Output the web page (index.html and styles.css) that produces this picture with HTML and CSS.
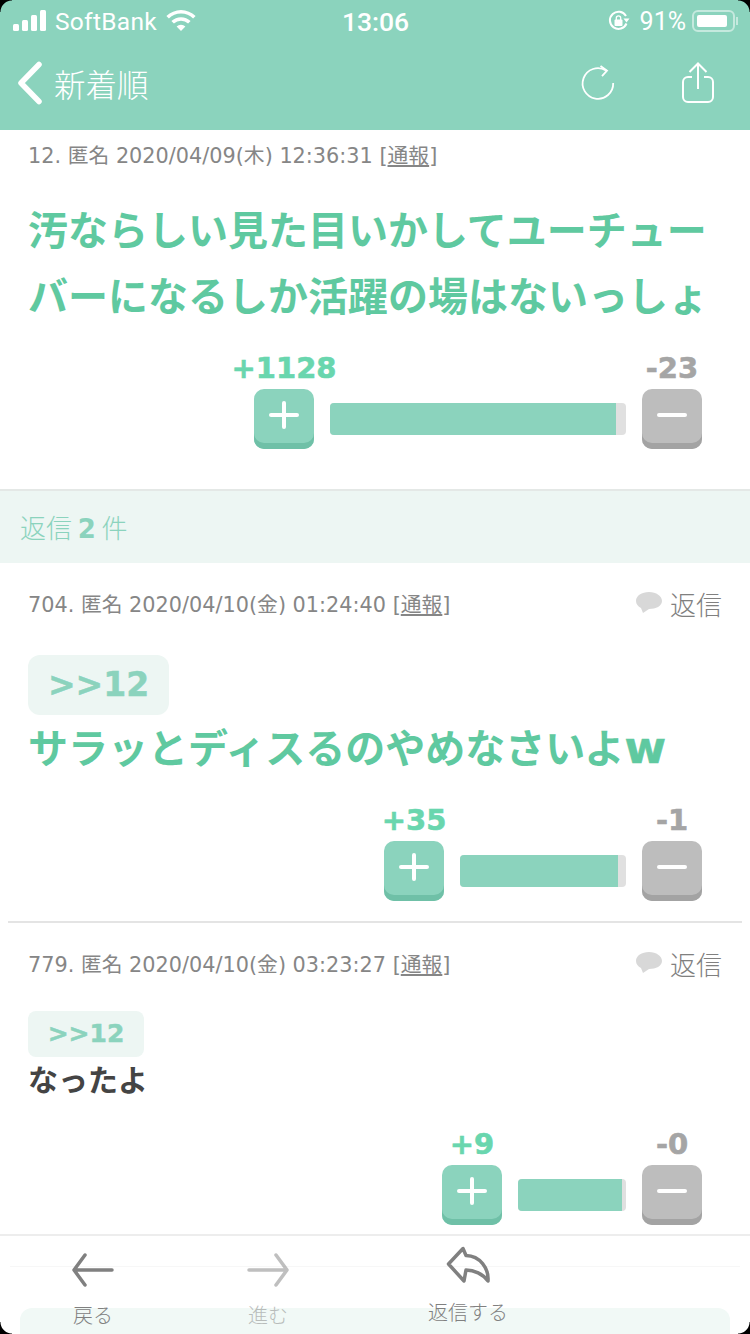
FILE: index.html
```html
<!DOCTYPE html>
<html lang="ja">
  <head>
    <meta charset="UTF-8" />
    <title>新着順</title>
    <link rel="stylesheet" href="styles.css">
  </head>
  <body>
    <div class="screen">
      <header>
        <div class="status">
          <div class="status-left">
            <svg class="signal" width="34" height="22" viewBox="0 0 34 22"><rect x="0" y="14" width="6" height="7" rx="1.5"/><rect x="9" y="10" width="6" height="11" rx="1.5"/><rect x="18" y="5" width="6" height="16" rx="1.5"/><rect x="27" y="0" width="6" height="21" rx="1.5"/></svg>
            <span class="carrier">SoftBank</span>
            <svg class="wifi" width="30" height="22" viewBox="0 0 30 22"><path d="M15 21l-4.400-4.600a6.400 6.400 0 0 1 8.800 0zM7.900 13.600l-2.500-2.600a14 14 0 0 1 19.200 0l-2.500 2.600a10.400 10.400 0 0 0-14.200 0zM2.900 8.500L.4 6a21 21 0 0 1 29.200 0l-2.500 2.500a17.400 17.400 0 0 0-24.200 0z"/></svg>
          </div>
          <span class="time">13:06</span>
          <div class="status-right">
            <svg class="lock" width="22" height="22" viewBox="0 0 22 22"><path d="M18.500 13.500A8.600 8.600 0 1 1 18 6" fill="none" stroke="#fff" stroke-width="2"/><path d="M15.500 8.500h6l-3 4z" fill="#fff"/><rect x="6.500" y="9.500" width="8" height="6.500" rx="1" fill="#fff"/><path d="M8.300 10V8a2.200 2.200 0 0 1 4.400 0v2" fill="none" stroke="#fff" stroke-width="1.300"/></svg>
            <span class="percent">91%</span>
            <div class="battery"><div class="battery-level"></div></div>
            <div class="battery-tip"></div>
          </div>
        </div>
        <nav>
          <a class="back">
            <svg width="26" height="44" viewBox="0 0 26 44"><path d="M22 3.500L4 22l18 18.500" fill="none" stroke="#fff" stroke-width="5.500" stroke-linecap="round" stroke-linejoin="round"/></svg>
            <span>新着順</span>
          </a>
          <div class="nav-icons">
            <svg width="36" height="36" viewBox="0 0 36 36"><path d="M26 5.500A15.300 15.300 0 1 0 33.200 18" fill="none" stroke="#fff" stroke-width="1.800"/><path d="M20.500 1l6.500 4.700-5 5.500" fill="none" stroke="#fff" stroke-width="1.800"/></svg>
            <svg width="34" height="42" viewBox="0 0 34 42"><path d="M11 15H7a5 5 0 0 0-5 5v15a5 5 0 0 0 5 5h20a5 5 0 0 0 5-5V20a5 5 0 0 0-5-5h-4" fill="none" stroke="#fff" stroke-width="2"/><path d="M17 27V2M8.500 10L17 1.500 25.500 10" fill="none" stroke="#fff" stroke-width="2"/></svg>
          </div>
        </nav>
      </header>

      <main>
        <article class="post first">
          <div class="meta"><p>12. 匿名 2020/04/09(木) 12:36:31 [<u>通報</u>]</p></div>
          <h2 class="title long">汚ならしい見た目いかしてユーチューバーになるしか活躍の場はないっしょ</h2>
          <div class="votes">
            <div class="vote plus"><span class="count">+1128</span><div class="key"><i class="h"></i><i class="v"></i></div></div>
            <div class="bar" style="width: 296px"><div class="fill" style="width: 286px"></div></div>
            <div class="vote minus"><span class="count">-23</span><div class="key"><i class="h"></i></div></div>
          </div>
        </article>

        <div class="reply-head">返信 <b>2</b> 件</div>

        <article class="post second">
          <div class="meta">
            <p>704. 匿名 2020/04/10(金) 01:24:40 [<u>通報</u>]</p>
            <a class="reply"><svg width="28" height="24" viewBox="0 0 28 24"><path d="M14 1C6.800 1 1 4.800 1 10c0 3 2 5.500 5 7l2 5 6-4c7 0 13-3 13-8S21.200 1 14 1z" fill="#d8d8d8"/></svg>返信</a>
          </div>
          <div class="quote big-quote">&gt;&gt;12</div>
          <h2 class="title">サラッとディスるのやめなさいよ<span class="latin">w</span></h2>
          <div class="votes">
            <div class="vote plus"><span class="count">+35</span><div class="key"><i class="h"></i><i class="v"></i></div></div>
            <div class="bar" style="width: 166px"><div class="fill" style="width: 158px"></div></div>
            <div class="vote minus"><span class="count">-1</span><div class="key"><i class="h"></i></div></div>
          </div>
        </article>

        <hr />

        <article class="post third">
          <div class="meta">
            <p>779. 匿名 2020/04/10(金) 03:23:27 [<u>通報</u>]</p>
            <a class="reply"><svg width="28" height="24" viewBox="0 0 28 24"><path d="M14 1C6.800 1 1 4.800 1 10c0 3 2 5.500 5 7l2 5 6-4c7 0 13-3 13-8S21.200 1 14 1z" fill="#d8d8d8"/></svg>返信</a>
          </div>
          <div class="quote">&gt;&gt;12</div>
          <p class="body">なったよ</p>
          <div class="votes">
            <div class="vote plus"><span class="count">+9</span><div class="key"><i class="h"></i><i class="v"></i></div></div>
            <div class="bar" style="width: 108px"><div class="fill" style="width: 104px"></div></div>
            <div class="vote minus"><span class="count">-0</span><div class="key"><i class="h"></i></div></div>
          </div>
        </article>
      </main>

      <footer class="toolbar">
        <div class="next-card"></div>
        <a class="tool">
          <svg width="44" height="34" viewBox="0 0 44 34"><path d="M41 17H4M14 2L3 17l11 15" fill="none" stroke="#808080" stroke-width="3.500" stroke-linecap="round" stroke-linejoin="round"/></svg>
          <span>戻る</span>
        </a>
        <a class="tool off">
          <svg width="44" height="34" viewBox="0 0 44 34"><path d="M3 17h37M30 2l11 15-11 15" fill="none" stroke="#808080" stroke-width="3.500" stroke-linecap="round" stroke-linejoin="round"/></svg>
          <span>進む</span>
        </a>
        <a class="tool reply-tool">
          <svg width="44" height="38" viewBox="0 0 44 38"><path d="M17 2.500L2.500 18 18 35l2-11c8 0 17 4 22 11 1-13-8-25-22-25.500z" fill="none" stroke="#808080" stroke-width="3.500" stroke-linejoin="round"/></svg>
          <span>返信する</span>
        </a>
      </footer>

      <div class="corner tl"></div>
      <div class="corner tr"></div>
      <div class="corner bl"></div>
      <div class="corner br"></div>
    </div>
  </body>
</html>
```

FILE: styles.css
```css
* {
  margin: 0px;
  padding: 0px;
  box-sizing: border-box;
}

body {
  background-color: white;
  font-family: "DejaVu Sans", "Noto Sans CJK JP", sans-serif;
}

.screen {
  position: relative;
  width: 750px;
  height: 1334px;
  overflow: hidden;
}

/* Header */
header {
  height: 130px;
  background-color: #8bd3bd;
  color: white;
}

.status {
  display: grid;
  grid-template-columns: 1fr auto 1fr;
  align-items: center;
  height: 42px;
  padding: 0 12px 0 13px;
  font-family: Roboto, sans-serif;
  font-size: 25px;
}

.status-left,
.status-right {
  display: flex;
  align-items: center;
}

.status-right {
  justify-content: flex-end;
}

.signal,
.wifi {
  fill: white;
}

.carrier {
  margin-left: 8px;
  margin-right: 9px;
  font-size: 24.500px;
  letter-spacing: 0.3px;
}

.time {
  font-size: 26.500px;
  font-weight: 500;
}

.lock {
  margin-right: 10px;
}

.battery {
  width: 43px;
  height: 22px;
  margin-left: 6px;
  padding: 3px;
  border: 2px solid rgba(255, 255, 255, 0.5);
  border-radius: 6px;
}

.battery-level {
  height: 100%;
  width: 92%;
  background-color: white;
  border-radius: 2px;
}

.battery-tip {
  width: 2px;
  height: 8px;
  margin-left: 1px;
  background-color: rgba(255, 255, 255, 0.5);
}

nav {
  display: flex;
  align-items: center;
  justify-content: space-between;
  height: 88px;
  padding: 0 35px 6px 17px;
}

.back {
  display: flex;
  align-items: center;
  gap: 11px;
  font-family: "Noto Sans CJK JP", sans-serif;
  font-size: 31.500px;
  font-weight: 300;
  line-height: 44px;
}

.nav-icons {
  display: flex;
  align-items: center;
  gap: 65px;
}

/* Posts */
.post {
  padding: 0 28px;
}

.meta {
  display: flex;
  align-items: center;
  justify-content: space-between;
  height: 80px;
  color: #868686;
  font-size: 20.800px;
}

.first .meta {
  height: 48px;
}

.reply {
  display: flex;
  align-items: center;
  gap: 7px;
  font-family: "Noto Sans CJK JP", sans-serif;
  font-size: 26px;
  font-weight: 300;
  color: #808080;
  margin-left: -4px;
}

.title {
  font-size: 40px;
  color: #5fc9a0;
  font-family: "Noto Sans CJK JP", sans-serif;
  font-weight: 700;
  line-height: 66px;
}

.long {
  margin-top: 17px;
}

.latin {
  font-family: "DejaVu Sans", sans-serif;
  font-size: 45px;
  -webkit-text-stroke: 0.6px #5fc9a0;
}

.quote {
  width: 116px;
  height: 46px;
  margin-top: 8px;
  border-radius: 8px;
  background-color: #edf6f3;
  color: #8bd3bd;
  font-weight: 700;
  font-size: 25px;
  line-height: 46px;
  text-align: center;
  -webkit-text-stroke: 0.5px #8bd3bd;
}

.big-quote {
  width: 141px;
  height: 60px;
  margin-top: 12px;
  margin-bottom: -2px;
  border-radius: 12px;
  font-size: 33px;
  line-height: 60px;
}

.body {
  color: #444444;
  font-family: "Noto Sans CJK JP", sans-serif;
  font-weight: 700;
  font-size: 30px;
  line-height: 42px;
}

/* Votes */
.votes {
  display: flex;
  justify-content: flex-end;
  align-items: flex-end;
  gap: 16px;
  padding-right: 20px;
}

.first .votes {
  margin-top: 24px;
}

.second .votes {
  margin-top: 22px;
}

.third .votes {
  margin-top: 28px;
}

.vote {
  display: flex;
  flex-direction: column;
  align-items: center;
  width: 60px;
}

.count {
  font-size: 29px;
  font-weight: 700;
  line-height: 34px;
  height: 38px;
  white-space: nowrap;
  -webkit-text-stroke: 0.6px;
}

.plus .count {
  color: #69d6ae;
}

.minus .count {
  color: #a5a5a5;
}

.key {
  position: relative;
  width: 60px;
  height: 60px;
  border-radius: 10px;
}

.plus .key {
  background-color: #8bd3bd;
  box-shadow: inset 0 -6px 0 #6fc0a7;
}

.minus .key {
  background-color: #bdbdbd;
  box-shadow: inset 0 -6px 0 #a3a3a3;
}

.key i {
  position: absolute;
  background-color: white;
  border-radius: 2px;
}

.key .h {
  left: 15px;
  top: 24px;
  width: 30px;
  height: 4px;
}

.key .v {
  left: 28px;
  top: 12px;
  width: 4px;
  height: 28px;
}

.bar {
  height: 32px;
  margin-bottom: 14px;
  border-radius: 4px;
  background-color: #e0e0e0;
  overflow: hidden;
}

.fill {
  height: 100%;
  background-color: #8bd3bd;
}

.first {
  padding-bottom: 40px;
}

.second {
  padding-bottom: 20px;
}

/* Reply header */
.reply-head {
  height: 74px;
  padding-left: 20px;
  border-top: 2px solid #e4e8e6;
  background-color: #edf6f3;
  color: #8bd3bd;
  font-family: "Noto Sans CJK JP", sans-serif;
  font-size: 26px;
  font-weight: 300;
  line-height: 72px;
}

.reply-head b {
  font-family: "DejaVu Sans", sans-serif;
  font-weight: 700;
}

hr {
  height: 2px;
  margin: 0 8px;
  border: 0;
  background-color: #e4e4e4;
}

/* Bottom toolbar, sits over the list */
.toolbar {
  position: absolute;
  left: 0;
  right: 0;
  bottom: 0;
  height: 100px;
  border-top: 2px solid #ededed;
  background-color: white;
}

.next-card {
  position: absolute;
  left: 20px;
  right: 20px;
  top: 72px;
  height: 40px;
  border-radius: 12px;
  background-color: #f1f9f6;
}

.toolbar::before {
  content: "";
  position: absolute;
  left: 10px;
  right: 10px;
  top: 30px;
  height: 1px;
  background-color: #f7f7f7;
}

.tool {
  position: absolute;
  top: 17px;
  display: flex;
  flex-direction: column;
  align-items: center;
  gap: 14px;
  width: 80px;
  color: #808080;
  font-family: "Noto Sans CJK JP", sans-serif;
  font-size: 20px;
  font-weight: 300;
  line-height: 28px;
}

.tool:nth-of-type(1) {
  left: 53px;
}

.tool:nth-of-type(2) {
  left: 228px;
}

.off {
  opacity: 0.5;
}

.reply-tool {
  left: 428px !important;
  top: 10px;
  gap: 14px;
}

/* Rounded corners of the phone screen */
.corner {
  position: absolute;
  width: 12px;
  height: 12px;
}

.tl {
  left: 0;
  top: 0;
  background: radial-gradient(circle at 100% 100%, transparent 11px, black 12px);
}

.tr {
  right: 0;
  top: 0;
  background: radial-gradient(circle at 0 100%, transparent 11px, black 12px);
}

.bl {
  left: 0;
  bottom: 0;
  background: radial-gradient(circle at 100% 0, transparent 11px, black 12px);
}

.br {
  right: 0;
  bottom: 0;
  background: radial-gradient(circle at 0 0, transparent 11px, black 12px);
}
```
